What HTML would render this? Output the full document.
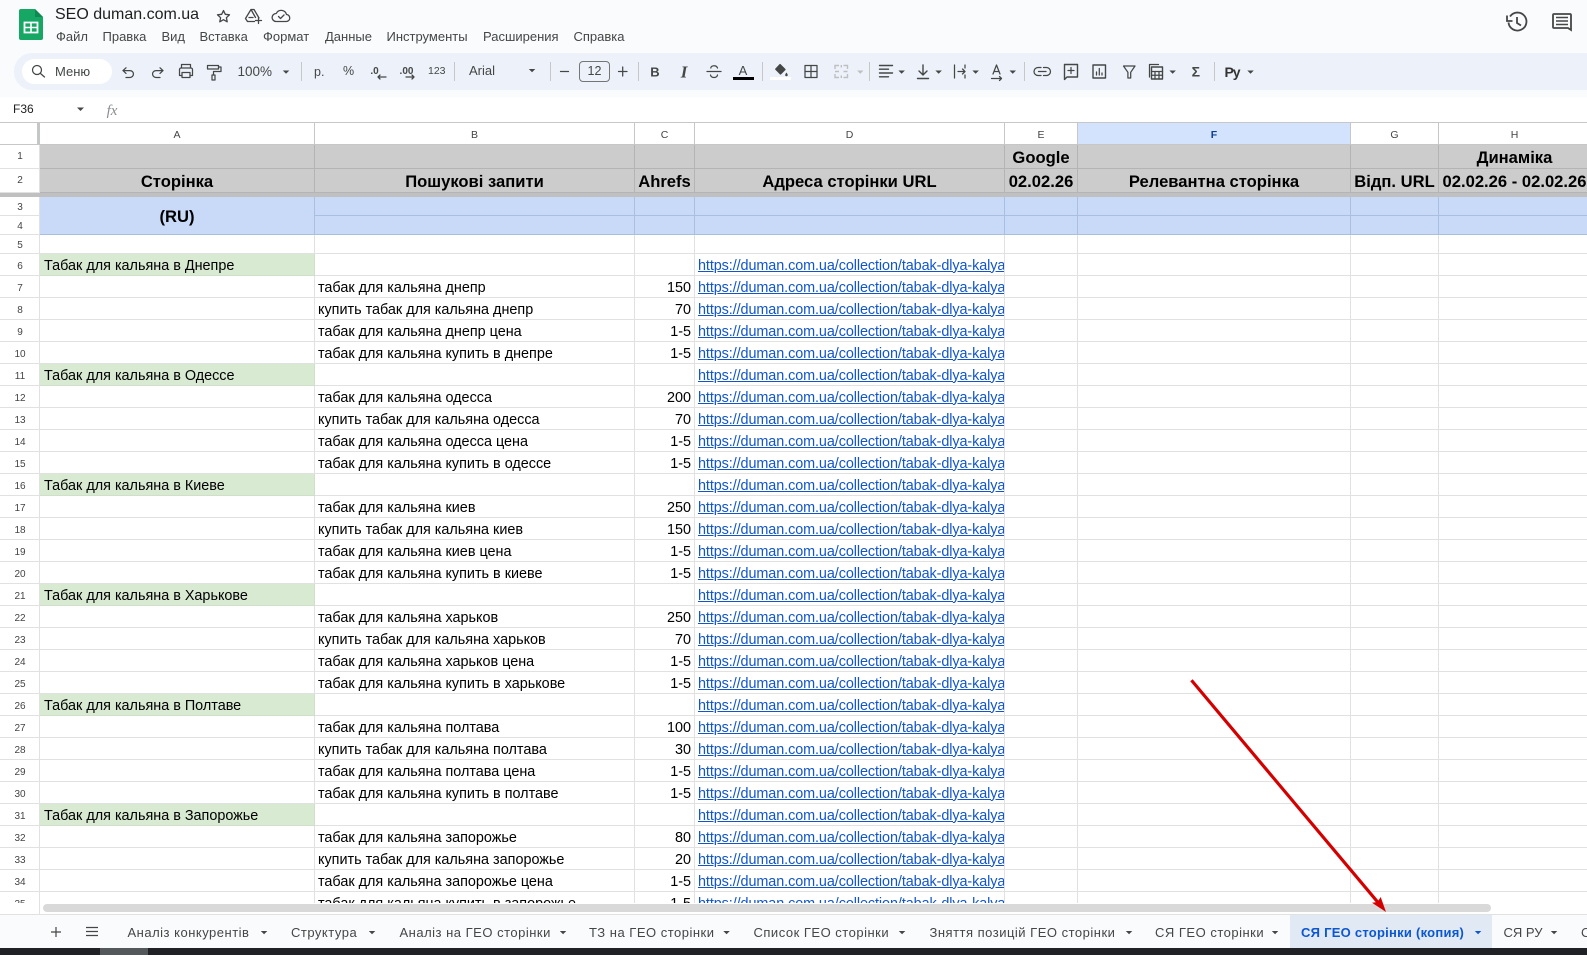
<!DOCTYPE html>
<html lang="uk"><head><meta charset="utf-8"><title>SEO duman.com.ua</title>
<style>
html,body{margin:0;padding:0}
body{width:1587px;height:955px;overflow:hidden;background:#f9fbfd;position:relative;font-family:"Liberation Sans",Arial,sans-serif;color:#1f1f1f}
.t{position:absolute;white-space:nowrap;line-height:1}
.m{top:30px;font-size:13px;color:#444746}
.tab{top:926px;font-size:13px;font-weight:400;color:#444746;letter-spacing:.5px}
#grid{position:absolute;left:0;top:122px;width:1587px;height:781px;overflow:hidden;background:#fff;border-top:1px solid #c7c7c7;box-sizing:border-box}
table{border-collapse:separate;border-spacing:0;table-layout:fixed;width:1591px;font-size:14.4px;color:#000}
td{border-right:1px solid #e1e1e1;border-bottom:1px solid #e1e1e1;padding:2px 3px 0;box-sizing:border-box;white-space:nowrap;overflow:hidden;vertical-align:middle;line-height:16px}
td.n{padding:4px 0 0 1px;text-align:center;font-size:10px;line-height:12px;color:#444}
tr.h td{text-align:center;font-size:10.5px;line-height:12px;color:#444;border-right-color:#c7c7c7;border-bottom-color:#c7c7c7;background:#fff}
tr.h td.n{border-right:3px solid #c4c7c5;padding:0}
tr.g td.n{padding:0 0 0 1px}
tr.g td:not(.n){background:#ccc;border-color:#b4b4b4;font-weight:700;font-size:16.6px;text-align:center;padding:2px 0 0;overflow:visible}
tr.b td{background:#c0c0c0;border:0;padding:0;height:4px;font-size:0;line-height:0}
tr.u td:not(.n){background:#c9daf8;border-color:#a9bfe0}
td.s{background:#d9ead3;border-color:#cfdfc9;padding-left:4px}
td.r{text-align:right}
td.l{color:#1155cc;text-decoration:underline;letter-spacing:-.08px}
tr.o td{height:22px}
</style></head><body>

<div class="t" style="left:55px;top:7px;font-size:16px;color:#1f1f1f">SEO duman.com.ua</div>
<div class="t m" style="left:56px">Файл</div>
<div class="t m" style="left:102.5px">Правка</div>
<div class="t m" style="left:161.5px">Вид</div>
<div class="t m" style="left:199.5px">Вставка</div>
<div class="t m" style="left:263px">Формат</div>
<div class="t m" style="left:325px">Данные</div>
<div class="t m" style="left:386.5px">Инструменты</div>
<div class="t m" style="left:483px">Расширения</div>
<div class="t m" style="left:573.5px">Справка</div>

<div style="position:absolute;left:14px;top:53px;width:1573px;height:37px;background:#edf2fa;border-radius:18px 0 0 18px"></div>
<div style="position:absolute;left:22px;top:59px;width:90px;height:25px;background:#fff;border-radius:13px"></div>
<div style="position:absolute;left:0;top:97px;width:1587px;height:25px;background:#fff"></div>
<div class="t" style="left:55px;top:65px;font-size:13px;color:#444746">Меню</div>
<div class="t" style="left:237.5px;top:65px;font-size:13.5px;color:#444746">100%</div>
<div class="t" style="left:314px;top:66px;font-size:12.5px;color:#444746">р.</div>
<div class="t" style="left:343px;top:65px;font-size:12.5px;color:#444746">%</div>
<div class="t" style="left:428px;top:66px;font-size:10.5px;color:#444746">123</div>
<div class="t" style="left:469px;top:64px;font-size:13px;color:#444746">Arial</div>
<div class="t" style="left:579px;top:61px;width:31px;height:21px;box-sizing:border-box;border:1px solid #747775;border-radius:4px;text-align:center;font-size:12.5px;line-height:19px;color:#444746">12</div>
<div class="t" style="left:13px;top:103px;font-size:12px;color:#1f1f1f">F36</div>

<div id="grid"><table>
<colgroup><col style="width:40px"><col style="width:275px"><col style="width:320px"><col style="width:60px"><col style="width:310px"><col style="width:73px"><col style="width:273px"><col style="width:88px"><col style="width:152px"></colgroup>
<tr class="h" style="height:22px"><td class="n" style="background:#fff;border-bottom-color:#c7c7c7"></td><td>A</td><td>B</td><td>C</td><td>D</td><td>E</td><td style="background:#d3e3fd;color:#0b3f8f;font-weight:700">F</td><td>G</td><td>H</td></tr>
<tr class="g" style="height:24px"><td class="n">1</td><td></td><td></td><td></td><td></td><td>Google</td><td></td><td></td><td>Динаміка</td></tr>
<tr class="g" style="height:24px"><td class="n" style="padding-top:1px">2</td><td>Сторінка</td><td>Пошукові запити</td><td>Ahrefs</td><td>Адреса сторінки URL</td><td>02.02.26</td><td>Релевантна сторінка</td><td>Відп. URL</td><td>02.02.26 - 02.02.26</td></tr>
<tr class="b"><td colspan="9" style="height:4px"></td></tr>
<tr class="u" style="height:19px"><td class="n">3</td><td rowspan="2" style="font-weight:700;font-size:16.6px;text-align:center">(RU)</td><td></td><td></td><td></td><td></td><td></td><td></td><td></td></tr>
<tr class="u" style="height:19px"><td class="n">4</td><td></td><td></td><td></td><td></td><td></td><td></td><td></td></tr>
<tr style="height:19px"><td class="n">5</td><td></td><td></td><td></td><td></td><td></td><td></td><td></td><td></td></tr>
<tr class="o"><td class="n">6</td><td class="s">Табак для кальяна в Днепре</td><td></td><td></td><td class="l">https://duman.com.ua/collection/tabak-dlya-kalyana</td><td></td><td></td><td></td><td></td></tr>
<tr class="o"><td class="n">7</td><td></td><td>табак для кальяна днепр</td><td class="r">150</td><td class="l">https://duman.com.ua/collection/tabak-dlya-kalyana</td><td></td><td></td><td></td><td></td></tr>
<tr class="o"><td class="n">8</td><td></td><td>купить табак для кальяна днепр</td><td class="r">70</td><td class="l">https://duman.com.ua/collection/tabak-dlya-kalyana</td><td></td><td></td><td></td><td></td></tr>
<tr class="o"><td class="n">9</td><td></td><td>табак для кальяна днепр цена</td><td class="r">1-5</td><td class="l">https://duman.com.ua/collection/tabak-dlya-kalyana</td><td></td><td></td><td></td><td></td></tr>
<tr class="o"><td class="n">10</td><td></td><td>табак для кальяна купить в днепре</td><td class="r">1-5</td><td class="l">https://duman.com.ua/collection/tabak-dlya-kalyana</td><td></td><td></td><td></td><td></td></tr>
<tr class="o"><td class="n">11</td><td class="s">Табак для кальяна в Одессе</td><td></td><td></td><td class="l">https://duman.com.ua/collection/tabak-dlya-kalyana</td><td></td><td></td><td></td><td></td></tr>
<tr class="o"><td class="n">12</td><td></td><td>табак для кальяна одесса</td><td class="r">200</td><td class="l">https://duman.com.ua/collection/tabak-dlya-kalyana</td><td></td><td></td><td></td><td></td></tr>
<tr class="o"><td class="n">13</td><td></td><td>купить табак для кальяна одесса</td><td class="r">70</td><td class="l">https://duman.com.ua/collection/tabak-dlya-kalyana</td><td></td><td></td><td></td><td></td></tr>
<tr class="o"><td class="n">14</td><td></td><td>табак для кальяна одесса цена</td><td class="r">1-5</td><td class="l">https://duman.com.ua/collection/tabak-dlya-kalyana</td><td></td><td></td><td></td><td></td></tr>
<tr class="o"><td class="n">15</td><td></td><td>табак для кальяна купить в одессе</td><td class="r">1-5</td><td class="l">https://duman.com.ua/collection/tabak-dlya-kalyana</td><td></td><td></td><td></td><td></td></tr>
<tr class="o"><td class="n">16</td><td class="s">Табак для кальяна в Киеве</td><td></td><td></td><td class="l">https://duman.com.ua/collection/tabak-dlya-kalyana</td><td></td><td></td><td></td><td></td></tr>
<tr class="o"><td class="n">17</td><td></td><td>табак для кальяна киев</td><td class="r">250</td><td class="l">https://duman.com.ua/collection/tabak-dlya-kalyana</td><td></td><td></td><td></td><td></td></tr>
<tr class="o"><td class="n">18</td><td></td><td>купить табак для кальяна киев</td><td class="r">150</td><td class="l">https://duman.com.ua/collection/tabak-dlya-kalyana</td><td></td><td></td><td></td><td></td></tr>
<tr class="o"><td class="n">19</td><td></td><td>табак для кальяна киев цена</td><td class="r">1-5</td><td class="l">https://duman.com.ua/collection/tabak-dlya-kalyana</td><td></td><td></td><td></td><td></td></tr>
<tr class="o"><td class="n">20</td><td></td><td>табак для кальяна купить в киеве</td><td class="r">1-5</td><td class="l">https://duman.com.ua/collection/tabak-dlya-kalyana</td><td></td><td></td><td></td><td></td></tr>
<tr class="o"><td class="n">21</td><td class="s">Табак для кальяна в Харькове</td><td></td><td></td><td class="l">https://duman.com.ua/collection/tabak-dlya-kalyana</td><td></td><td></td><td></td><td></td></tr>
<tr class="o"><td class="n">22</td><td></td><td>табак для кальяна харьков</td><td class="r">250</td><td class="l">https://duman.com.ua/collection/tabak-dlya-kalyana</td><td></td><td></td><td></td><td></td></tr>
<tr class="o"><td class="n">23</td><td></td><td>купить табак для кальяна харьков</td><td class="r">70</td><td class="l">https://duman.com.ua/collection/tabak-dlya-kalyana</td><td></td><td></td><td></td><td></td></tr>
<tr class="o"><td class="n">24</td><td></td><td>табак для кальяна харьков цена</td><td class="r">1-5</td><td class="l">https://duman.com.ua/collection/tabak-dlya-kalyana</td><td></td><td></td><td></td><td></td></tr>
<tr class="o"><td class="n">25</td><td></td><td>табак для кальяна купить в харькове</td><td class="r">1-5</td><td class="l">https://duman.com.ua/collection/tabak-dlya-kalyana</td><td></td><td></td><td></td><td></td></tr>
<tr class="o"><td class="n">26</td><td class="s">Табак для кальяна в Полтаве</td><td></td><td></td><td class="l">https://duman.com.ua/collection/tabak-dlya-kalyana</td><td></td><td></td><td></td><td></td></tr>
<tr class="o"><td class="n">27</td><td></td><td>табак для кальяна полтава</td><td class="r">100</td><td class="l">https://duman.com.ua/collection/tabak-dlya-kalyana</td><td></td><td></td><td></td><td></td></tr>
<tr class="o"><td class="n">28</td><td></td><td>купить табак для кальяна полтава</td><td class="r">30</td><td class="l">https://duman.com.ua/collection/tabak-dlya-kalyana</td><td></td><td></td><td></td><td></td></tr>
<tr class="o"><td class="n">29</td><td></td><td>табак для кальяна полтава цена</td><td class="r">1-5</td><td class="l">https://duman.com.ua/collection/tabak-dlya-kalyana</td><td></td><td></td><td></td><td></td></tr>
<tr class="o"><td class="n">30</td><td></td><td>табак для кальяна купить в полтаве</td><td class="r">1-5</td><td class="l">https://duman.com.ua/collection/tabak-dlya-kalyana</td><td></td><td></td><td></td><td></td></tr>
<tr class="o"><td class="n">31</td><td class="s">Табак для кальяна в Запорожье</td><td></td><td></td><td class="l">https://duman.com.ua/collection/tabak-dlya-kalyana</td><td></td><td></td><td></td><td></td></tr>
<tr class="o"><td class="n">32</td><td></td><td>табак для кальяна запорожье</td><td class="r">80</td><td class="l">https://duman.com.ua/collection/tabak-dlya-kalyana</td><td></td><td></td><td></td><td></td></tr>
<tr class="o"><td class="n">33</td><td></td><td>купить табак для кальяна запорожье</td><td class="r">20</td><td class="l">https://duman.com.ua/collection/tabak-dlya-kalyana</td><td></td><td></td><td></td><td></td></tr>
<tr class="o"><td class="n">34</td><td></td><td>табак для кальяна запорожье цена</td><td class="r">1-5</td><td class="l">https://duman.com.ua/collection/tabak-dlya-kalyana</td><td></td><td></td><td></td><td></td></tr>
<tr class="o"><td class="n">35</td><td></td><td>табак для кальяна купить в запорожье</td><td class="r">1-5</td><td class="l">https://duman.com.ua/collection/tabak-dlya-kalyana</td><td></td><td></td><td></td><td></td></tr>
</table></div>

<div style="position:absolute;left:0;top:903px;width:1587px;height:11px;background:#fff;border-bottom:1px solid #e1e1e1"></div>
<div style="position:absolute;left:39px;top:903px;width:1px;height:11px;background:#e1e1e1"></div>
<div style="position:absolute;left:43px;top:904px;width:1448px;height:8px;background:#d9d9d9;border-radius:4px"></div>
<div style="position:absolute;left:1290px;top:915px;width:202px;height:33px;background:#e1e9f5"></div>

<div class="t tab" style="left:127.5px">Аналіз конкурентів</div>
<div class="t tab" style="left:291px">Структура</div>
<div class="t tab" style="left:399.5px">Аналіз на ГЕО сторінки</div>
<div class="t tab" style="left:589px">ТЗ на ГЕО сторінки</div>
<div class="t tab" style="left:753.5px">Список ГЕО сторінки</div>
<div class="t tab" style="left:929.5px">Зняття позицій ГЕО сторінки</div>
<div class="t tab" style="left:1155px">СЯ ГЕО сторінки</div>
<div class="t tab" style="left:1301px;color:#0b57d0;font-weight:700;letter-spacing:.25px">СЯ ГЕО сторінки (копия)</div>
<div class="t tab" style="left:1503.5px;letter-spacing:0">СЯ РУ</div>
<div class="t tab" style="left:1581px">С</div>

<div style="position:absolute;left:0;top:948px;width:1587px;height:7px;background:#202124"></div>
<div style="position:absolute;left:100px;top:948px;width:48px;height:7px;background:#55585a"></div>

<svg width="1587" height="955" viewBox="0 0 1587 955" style="position:absolute;left:0;top:0;pointer-events:none" font-family="Liberation Sans, Arial, sans-serif">
<!-- logo -->
<path d="M21 9h14l8 8v21a2 2 0 0 1-2 2H21a2 2 0 0 1-2-2V11a2 2 0 0 1 2-2z" fill="#16a765"/>
<path d="M35 9l8 8h-8z" fill="#0e8a50"/>
<path d="M24.500 22.500h13v10h-13z" fill="none" stroke="#fff" stroke-width="1.800"/><path d="M31 22.500v10M24.500 27.500h13" stroke="#fff" stroke-width="1.600"/>
<g fill="none" stroke="#444746" stroke-width="1.300" stroke-linejoin="round" stroke-linecap="round">
<!-- star -->
<path d="M223.500 10.500l1.800 3.800 4.200.5-3.100 2.900.8 4.100-3.700-2.100-3.700 2.100.8-4.100-3.100-2.900 4.200-.5z"/>
<!-- drive -->
<path d="M251 9.500h3l5 8.500M251 9.500l-5.500 9 2 3h7M251 9.500l4.500 8M249 17.500h4M258.500 17.500v6M255.500 20.500h6"/>
<!-- cloud -->
<path d="M276 21.500h10a3.500 3.500 0 0 0 .5-7 5.500 5.500 0 0 0-10.300-1 4 4 0 0 0-.2 8z"/><path d="M278.500 16.500l2 2 3.500-3.500"/>
</g>
<path d="M1510 16.500a9 9 0 1 1-1.500 6M1507 15.500v5.500h5.500M1517 17v6l4 2.500" fill="none" stroke="#444746" stroke-width="1.800"/>
<path d="M1554 14h16a1 1 0 0 1 1 1v15l-3-2h-14a1 1 0 0 1-1-1V15a1 1 0 0 1 1-1z" fill="none" stroke="#444746" stroke-width="1.800"/>
<path d="M1556 17.500h12M1556 21h12M1556 24.500h12" stroke="#444746" stroke-width="1.600"/>

<!-- dividers -->
<g fill="#c7c7c7"><rect x="301" y="62" width="1" height="19"/><rect x="454" y="62" width="1" height="19"/><rect x="550" y="62" width="1" height="19"/><rect x="638" y="62" width="1" height="19"/><rect x="762" y="62" width="1" height="19"/><rect x="869" y="62" width="1" height="19"/><rect x="1024" y="62" width="1" height="19"/><rect x="1214" y="62" width="1" height="19"/></g>

<g fill="none" stroke="#444746" stroke-width="1.250" stroke-linejoin="round" stroke-linecap="round">
<circle cx="37" cy="70" r="4.500"/><path d="M40.500 73.500l4 3.500"/>
<path d="M126 67.800l-3 2.800 3 2.800M123 70.600h7a3.400 3.400 0 0 1 0 6.900h-4"/>
<path d="M160 67.800l3 2.800-3 2.800M163 70.600h-7a3.400 3.400 0 0 0 0 6.900h4"/>
<path d="M181.500 68v-3.500h9V68M182 75.500h-2.500v-6a1.500 1.500 0 0 1 1.500-1.500h10a1.500 1.500 0 0 1 1.500 1.500v6H190"/><rect x="182" y="72.500" width="8" height="5"/>
<rect x="207.500" y="65.500" width="11" height="3.500"/><path d="M218.500 67h2.500v4.500h-7.500v3.500"/><rect x="212" y="75" width="3" height="5"/>
<path d="M560.500 71.500h8M618.500 71.500h8.500M622.700 67v9"/>
<path d="M386 77h-8M380 75l-2 2 2 2M406 77h8M412 75l2 2-2 2"/>
<!-- strikethrough -->
<path d="M707 71.500h14M717.500 68c-.5-1.500-1.800-2.300-3.500-2.300s-3.200 1-3.200 2.300M710.500 75c.3 1.500 1.800 2.500 3.500 2.500s3.300-1 3.500-2.500"/>
<!-- borders -->
<rect x="805" y="65.500" width="12" height="12"/><path d="M811 65.500v12M805 71.500h12"/>
<!-- fill -->
<path d="M780 64.500l5 5-4.500 4.500-4.800-4.800z" fill="#444746"/>
<path d="M786.500 72.500c-1 1.300-1.300 2-1.300 2.500a1.200 1.200 0 0 0 2.500 0c0-.5-.3-1.200-1.200-2.500z" fill="#444746" stroke="none"/>
<!-- align -->
<path d="M879.500 65.500h13M879.500 69.200h9M879.500 73h13M879.500 76.800h9" stroke-width="1.400"/>
<!-- valign -->
<path d="M923 65v10M919 71l4 4 4-4M917.500 78.500h11" stroke-width="1.400"/>
<!-- wrap -->
<path d="M954.500 65v13M965 65v3M965 75v3M958 71.500h6.500M962.500 69l2.500 2.500-2.500 2.500"/>
<!-- rotate -->
<path d="M991.500 78.500h10M999.500 76.500l2 2-2 2M993 74l3.500-9 3.500 9M994 71.500h5"/>
<!-- link -->
<path d="M1041 67.500h-3a4 4 0 0 0 0 8h3M1043.500 67.500h3a4 4 0 0 1 0 8h-3M1038.500 71.500h7.500"/>
<!-- comment -->
<path d="M1064.500 64.500h13v12.500h-10.500l-2.500 2.500z" stroke-width="1.400"/><path d="M1071 67.500v6M1068 70.500h6"/>
<!-- chart -->
<rect x="1093" y="65" width="12.500" height="13" stroke-width="1.400"/><path d="M1096.500 75v-3M1099.300 75v-6.500M1102 75v-2"/>
<!-- filter -->
<path d="M1123.500 66h11.500l-4.300 6.300v5.700h-2.800v-5.700z"/>
<!-- calc -->
<path d="M1149.500 77v-12.500h9" /><rect x="1151.500" y="67" width="11" height="12" stroke-width="1.400"/><path d="M1151.500 71.500h11M1151.500 75.300h11M1155 71.500v7.500M1159 71.500v7.500"/>
</g>
<!-- merge (grey) -->
<g fill="none" stroke="#bdbfc1" stroke-width="1.400"><path d="M835 69v-3.500h4M847.500 69v-3.500h-4M835 74v3.500h4M847.500 74v3.500h-4M835 71.500h4M843.500 71.500h4M841.300 65v2.500M841.300 75.500v2.500"/></g>

<!-- text glyphs -->
<g fill="#444746">
<text x="655" y="76.500" font-size="13" font-weight="700" text-anchor="middle">B</text>
<text x="684" y="77.500" font-size="17" font-style="italic" font-weight="700" font-family="Liberation Serif, serif" text-anchor="middle">I</text>
<text x="743" y="75" font-size="13" text-anchor="middle">A</text>
<text x="374.500" y="74" font-size="10" font-weight="700" text-anchor="middle">.0</text>
<text x="406.500" y="74" font-size="10" font-weight="700" text-anchor="middle">.00</text>
<text x="1195.800" y="76.500" font-size="14" font-weight="700" text-anchor="middle">Σ</text>
<text x="1232" y="77" font-size="14" font-weight="700" letter-spacing="-1" text-anchor="middle" fill="#333">Pу</text>
<text x="112" y="115" font-size="15" font-style="italic" font-family="Liberation Serif, serif" fill="#8a8d90" text-anchor="middle">fx</text>
</g>
<rect x="733" y="77" width="21" height="3" fill="#000"/>
<rect x="770" y="77" width="21" height="3" fill="#fff"/>
<!-- carets -->
<g fill="#444746">
<path d="M282.800 70.500h6.500l-3.250 3.200zM528.800 69h6.500l-3.250 3.200zM898.400 70.500h6.500l-3.250 3.200zM935.400 70.500h6.500l-3.250 3.200zM972.400 70.500h6.500l-3.250 3.200zM1009.500 70.500h6.500l-3.250 3.200zM1169.400 70.500h6.500l-3.250 3.200zM1247.300 70.500h6.500l-3.250 3.200z"/>
<path d="M77 107.500h7l-3.500 3.500z"/>
<path d="M260.800 931h6.500l-3.250 3.200zM368.800 931h6.500l-3.250 3.200zM559.800 931h6.500l-3.250 3.200zM723.300 931h6.500l-3.250 3.200zM898.800 931h6.500l-3.250 3.200zM1125.800 931h6.500l-3.250 3.200zM1271.800 931h6.500l-3.250 3.200zM1550.800 931h6.500l-3.250 3.200z"/>
</g>
<path d="M857 70.500h6.500l-3.250 3.200z" fill="#bdbfc1"/>
<path d="M1474.800 931h6.500l-3.250 3.200z" fill="#0b57d0"/>
<!-- + and list in tab bar -->
<path d="M56 927v10M51 932h10" stroke="#444746" stroke-width="1.200" fill="none"/>
<path d="M86 927.500h12M86 931.500h12M86 935.500h12" stroke="#444746" stroke-width="1.300" fill="none"/>
<!-- red arrow -->
<path d="M1192.500 681.500L1381 906" stroke="#d40000" stroke-width="3.200" fill="none" stroke-linecap="square"/>
<path d="M1386 912l-14-9.300 5.500-.7 3.200-5z" fill="#d40000"/>
</svg>
</body></html>
